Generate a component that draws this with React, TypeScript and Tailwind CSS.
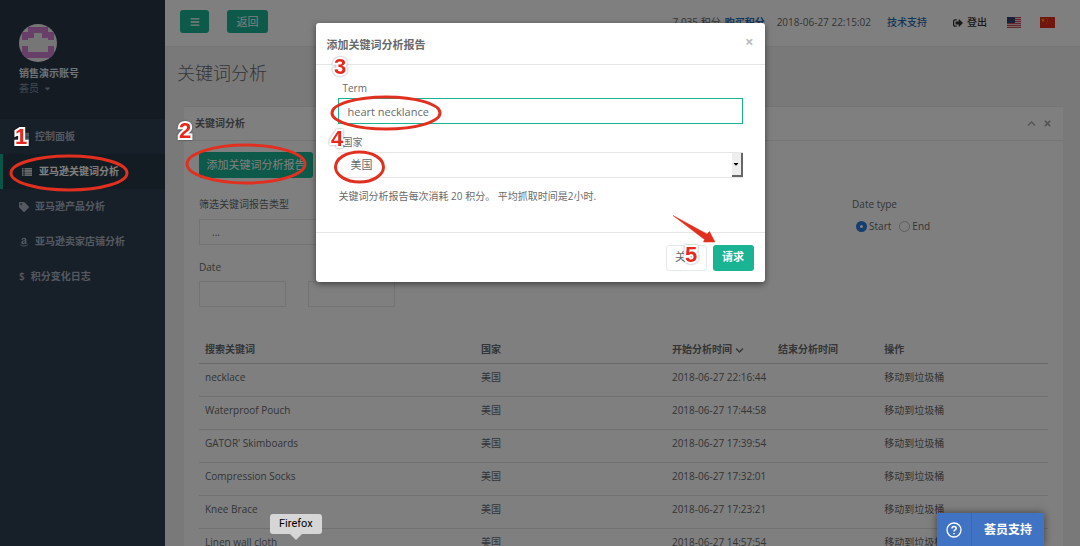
import { FaAmazon, FaBars, FaCaretDown, FaChevronDown, FaChevronUp, FaSignOutAlt, FaTag, FaThLarge, FaTimes } from "react-icons/fa";

const font = "font-['Open_Sans','Noto_Sans_CJK_SC',sans-serif]";

const rows = [
  ["necklace", "2018-06-27 22:16:44"],
  ["Waterproof Pouch", "2018-06-27 17:44:58"],
  ["GATOR' Skimboards", "2018-06-27 17:39:54"],
  ["Compression Socks", "2018-06-27 17:32:01"],
  ["Knee Brace", "2018-06-27 17:23:21"],
  ["Linen wall cloth", "2018-06-27 14:57:54"],
];

function Avatar() {
  return (
    <svg viewBox="0 0 38 38" className="size-[38px]" aria-hidden="true">
      <clipPath id="avatar"><circle cx="19" cy="19" r="19" /></clipPath>
      <g clipPath="url(#avatar)">
        <rect width="38" height="38" fill="#ececec" />
        <path d="M9 3h20v5h6v8h-6v-2h-6V9h-8v5h-6v2H3V8h6zM3 22h6v6h20v-6h6v12H3z" fill="#d07fd2" />
      </g>
    </svg>
  );
}

function ListIcon() {
  return (
    <svg viewBox="0 0 10 8" className="h-2 w-[10px]" stroke="currentColor" strokeWidth="1.300" aria-hidden="true">
      <path d="M0 .9h1.500M2.500 .9H10M0 3h1.500M2.500 3H10M0 5.100h1.500M2.500 5.100H10M0 7.200h1.500M2.500 7.200H10" />
    </svg>
  );
}

function UsFlag() {
  return (
    <svg viewBox="0 0 14 11" className="h-[11px] w-[14px]">
      <rect width="14" height="11" fill="#e8c8cc" />
      <path d="M0 .5h14M0 2.500h14M0 4.500h14M0 6.500h14M0 8.500h14M0 10.500h14" stroke="#c8505c" />
      <rect width="8" height="6" fill="#32416e" />
    </svg>
  );
}

function CnFlag() {
  return (
    <svg viewBox="0 0 15 11" className="h-[11px] w-[15px]">
      <rect width="15" height="11" fill="#e02d1b" />
      <path d="M3 1.200l.5 1.400H5L3.800 3.500l.4 1.400L3 4 1.800 4.900l.4-1.400L1 2.600h1.500z" fill="#ffb000" />
      <path d="M6 1h.7v.7H6zM7 2.500h.7v.7H7zM7 4.200h.7v.7H7zM6 5.700h.7v.7H6z" fill="#ff9000" />
    </svg>
  );
}

const menu = [
  { label: "控制面板", icon: <FaThLarge />, active: false },
  { label: "亚马逊关键词分析", icon: <ListIcon />, active: true },
  { label: "亚马逊产品分析", icon: <FaTag />, active: false },
  { label: "亚马逊卖家店铺分析", icon: <FaAmazon />, active: false },
  { label: "积分变化日志", icon: <span>$</span>, active: false },
];

function Sidebar() {
  return (
    <aside className="w-[165px] shrink-0 bg-[#2f4050] font-semibold text-[#a7b1c2]">
      <div className="flex h-[119px] flex-col items-start bg-[#283747] pt-6 pl-[19px]">
        <Avatar />
        <strong className="mt-1 leading-[15px] font-bold text-[#dfe4ed]">销售演示账号</strong>
        <button className="flex items-center gap-1 leading-[14px] font-normal text-[#8095a8]">
          荟员 <FaCaretDown className="size-[9px]" />
        </button>
      </div>
      <nav>
        {menu.map((m) => (
          <a
            key={m.label}
            href="#"
            className={
              m.active
                ? "flex h-[35px] items-center gap-[7px] border-l-[3px] border-[#19aa8d] bg-[#293846] pl-[19px] text-white"
                : "flex h-[35px] items-center gap-[6px] pl-[19px]"
            }
          >
            <span className="text-[10px]">{m.icon}</span>
            {m.label}
          </a>
        ))}
      </nav>
    </aside>
  );
}

function TopBar() {
  return (
    <header className="flex h-[47px] shrink-0 items-start border-b border-[#e7eaec] bg-white pr-[25px] pl-[15px]">
      <button aria-label="菜单" className="mt-[10px] flex h-[23px] w-[29px] items-center justify-center rounded-[3px] bg-[#1ab394] text-[10px] text-white"><FaBars /></button>
      <button className="mt-[10px] ml-[18px] h-[23px] w-[41px] rounded-[3px] bg-[#1ab394] text-[11px] leading-[23px] text-white">返回</button>
      <div className="ml-auto flex h-[45px] items-center">
        <span className="mr-1">7,035 积分</span>
        <a href="#" className="font-bold text-[#2a6fc0]">购买积分</a>
        <time className="ml-3">2018-06-27 22:15:02</time>
        <a href="#" className="ml-4 font-medium text-[#2968a8]">技术支持</a>
        <button className="ml-[26px] flex items-center gap-1 font-medium text-[#333]"><FaSignOutAlt />登出</button>
        <a href="#" aria-label="English" className="ml-5"><UsFlag /></a>
        <a href="#" aria-label="中文" className="ml-[19px]"><CnFlag /></a>
      </div>
    </header>
  );
}

function Report() {
  return (
    <section className="mt-[17px] mr-[17px] ml-[19px] min-h-0 flex-1 overflow-hidden border-t border-[#e7eaec] bg-white">
      <div className="flex h-[34px] items-center border-b border-[#e7eaec] px-[11px]">
        <h2 className="flex-1 font-bold">关键词分析</h2>
        <button aria-label="收起" className="mr-[7px] text-[9px] text-[#aaa]"><FaChevronUp /></button>
        <button aria-label="关闭面板" className="text-[9px] text-[#aaa]"><FaTimes /></button>
      </div>
      <div className="px-[15px] pt-[11px]">
        <button className="h-[26px] w-[114px] rounded-[3px] bg-[#1ab394] text-[11px] text-white">添加关键词分析报告</button>
        <div className="mt-[18px] grid grid-cols-[10fr_3fr]">
          <div className="flex flex-col">
            <label htmlFor="type" className="leading-4">筛选关键词报告类型</label>
            <select id="type" className="mt-[7px] h-[26px] w-[300px] appearance-none border border-[#e5e6e7] bg-white px-3">
              <option>...</option>
            </select>
            <label htmlFor="from" className="mt-[14px] leading-4">Date</label>
            <div className="mt-[6px] flex gap-[22px]">
              <input id="from" className="h-[26px] w-[87px] border border-[#e5e6e7] px-2" />
              <input aria-label="Date to" className="h-[26px] w-[87px] border border-[#e5e6e7] px-2" />
            </div>
          </div>
          <fieldset>
            <legend className="leading-4">Date type</legend>
            <div className="mt-[6px] flex items-center gap-2 pl-1 leading-4">
              <label className="flex items-center gap-[2px]">
                <input type="radio" name="dt" defaultChecked className="size-[11px] appearance-none rounded-full border-4 border-[#2f7ae0] bg-white" />Start
              </label>
              <label className="flex items-center gap-[2px]">
                <input type="radio" name="dt" className="size-[11px] appearance-none rounded-full border border-[#bbb] bg-white" />End
              </label>
            </div>
          </fieldset>
        </div>
        <table className="mt-[30px] w-full table-fixed border-collapse text-left">
          <thead>
            <tr className="h-[26px] border-b border-[#d0d2d4]">
              <th className="w-[32.5%] pl-[6px] font-bold">搜索关键词</th>
              <th className="w-[22.5%] pl-[6px] font-bold">国家</th>
              <th className="w-[12.5%] pl-[6px] font-bold whitespace-nowrap">开始分析时间 <FaChevronDown className="inline size-[9px]" /></th>
              <th className="w-[12.5%] pl-[6px] font-bold">结束分析时间</th>
              <th className="w-[20%] pl-[6px] font-bold">操作</th>
            </tr>
          </thead>
          <tbody>
            {rows.map(([term, time]) => (
              <tr key={term} className="h-[33px] border-b border-[#e0e2e4] align-top leading-[15px]">
                <td className="pt-[6px] pl-[6px]">{term}</td>
                <td className="pt-[6px] pl-[6px]">美国</td>
                <td className="pt-[6px] pl-[6px] whitespace-nowrap">{time}</td>
                <td />
                <td className="pt-[6px] pl-[6px]"><button>移动到垃圾桶</button></td>
              </tr>
            ))}
          </tbody>
        </table>
      </div>
    </section>
  );
}

function Dialog() {
  return (
    <div role="dialog" aria-label="添加关键词分析报告" className="w-full max-w-[449px] rounded-[3px] bg-white shadow-[0_2px_6px_rgba(0,0,0,0.5)]">
      <div className="flex h-[42px] items-center border-b border-[#e5e5e5] px-[11px]">
        <h3 className="flex-1 pt-1 text-[11px] font-semibold">添加关键词分析报告</h3>
        <button aria-label="关闭" className="pb-[5px] text-[15px] font-bold text-[#bbb]">×</button>
      </div>
      <div className="flex h-[168px] flex-col border-b border-[#e5e5e5] px-[22px] pt-[15px]">
        <label htmlFor="term" className="pl-[5px] leading-4">Term</label>
        <input id="term" defaultValue="heart necklance" className="mt-[2px] h-[26px] border border-[#1ab394] px-[9px] text-[11px] outline-none" />
        <label htmlFor="country" className="mt-[10px] pl-[5px] leading-4">国家</label>
        <div className="mt-[2px] grid h-[26px] border-y border-[#e5e6e7]">
          <select id="country" className="col-start-1 row-start-1 appearance-none px-[13px] text-[11px]"><option>美国</option></select>
          <span className="pointer-events-none col-start-1 row-start-1 flex w-[11px] items-center justify-center justify-self-end border-r-2 border-b-2 border-[#666] bg-[#eee] text-black"><FaCaretDown className="size-2" /></span>
        </div>
        <p className="mt-[10px] pl-px leading-4">关键词分析报告每次消耗 20 积分。 平均抓取时间是2小时.</p>
      </div>
      <div className="flex h-[49px] items-center justify-end gap-[6px] px-[11px]">
        <button className="h-[26px] w-[41px] rounded-[3px] border border-[#e7eaec] text-[11px]">关闭</button>
        <button className="h-[26px] w-[41px] rounded-[3px] bg-[#1ab394] text-[11px] font-semibold text-white">请求</button>
      </div>
    </div>
  );
}

const num = "absolute font-['Liberation_Sans',sans-serif] text-[22px] leading-6 font-bold text-[#e8281d] [-webkit-text-stroke:4px_white] [paint-order:stroke_fill] drop-shadow-[0_0_1px_rgba(0,0,0,0.4)]";

function Annotations() {
  return (
    <div className="pointer-events-none absolute inset-0">
      <svg className="absolute top-0 left-0 h-[300px] w-[760px]" viewBox="0 0 760 300" fill="none" stroke="#e1301f" strokeWidth="3">
        <ellipse cx="69" cy="173" rx="58" ry="17" />
        <ellipse cx="246" cy="164" rx="59" ry="19" />
        <ellipse cx="386" cy="113" rx="54" ry="16" />
        <ellipse cx="359.500" cy="167" rx="24" ry="15" />
        <path d="M673 215.500L704.500 239.500 703.500 242 715 242 709.500 231.500 707 234z" fill="#e1301f" stroke="#e1301f" strokeWidth=".5" strokeLinejoin="round" />
      </svg>
      <span className={num + " top-[125px] left-[15px]"}>1</span>
      <span className={num + " top-[119px] left-[179px]"}>2</span>
      <span className={num + " top-[55px] left-[334px]"}>3</span>
      <span className={num + " top-[127px] left-[331px]"}>4</span>
      <span className={num + " top-[243px] left-[685px]"}>5</span>
    </div>
  );
}

export default function App() {
  return (
    <div className={`relative flex h-screen overflow-hidden bg-[#f3f3f4] text-[10px] text-[#676a6c] ${font}`}>
      <Sidebar />
      <main className="flex min-w-0 flex-1 flex-col">
        <TopBar />
        <h1 className="mt-[10px] pl-3 text-[18px] leading-8 font-light">关键词分析</h1>
        <Report />
      </main>
      <div className="absolute inset-0 flex items-start justify-center bg-black/50 pt-[23px]"><Dialog /></div>
      <Annotations />
      <div className="absolute bottom-[6px] left-[270px] flex flex-col items-center font-['Roboto',sans-serif] text-[11px] text-black">
        <span className="rounded-[3px] bg-[#d6d6d6] px-[9px] leading-5">Firefox</span>
        <svg viewBox="0 0 12 6" className="h-[6px] w-3"><path d="M0 0h12L6 6z" fill="#d6d6d6" /></svg>
      </div>
      <button className="absolute right-9 bottom-0 flex h-[33px] w-[107px] items-center bg-[#4173c4] text-[12px] font-semibold text-white shadow-[0_0_8px_rgba(0,0,0,0.5)]">
        <span className="flex h-full w-[35px] items-center justify-center border-r border-[#3a68b4]">
          <svg viewBox="0 0 16 16" className="size-4" fill="none" stroke="white" strokeWidth="1.300"><circle cx="8" cy="8" r="7" /><path d="M6 6.500c0-2.700 4.200-2.500 4.200-.2C10.200 8 8 7.800 8 9.600M8 11v1.300" strokeWidth="1.500" /></svg>
        </span>
        <span className="flex-1">荟员支持</span>
      </button>
    </div>
  );
}
